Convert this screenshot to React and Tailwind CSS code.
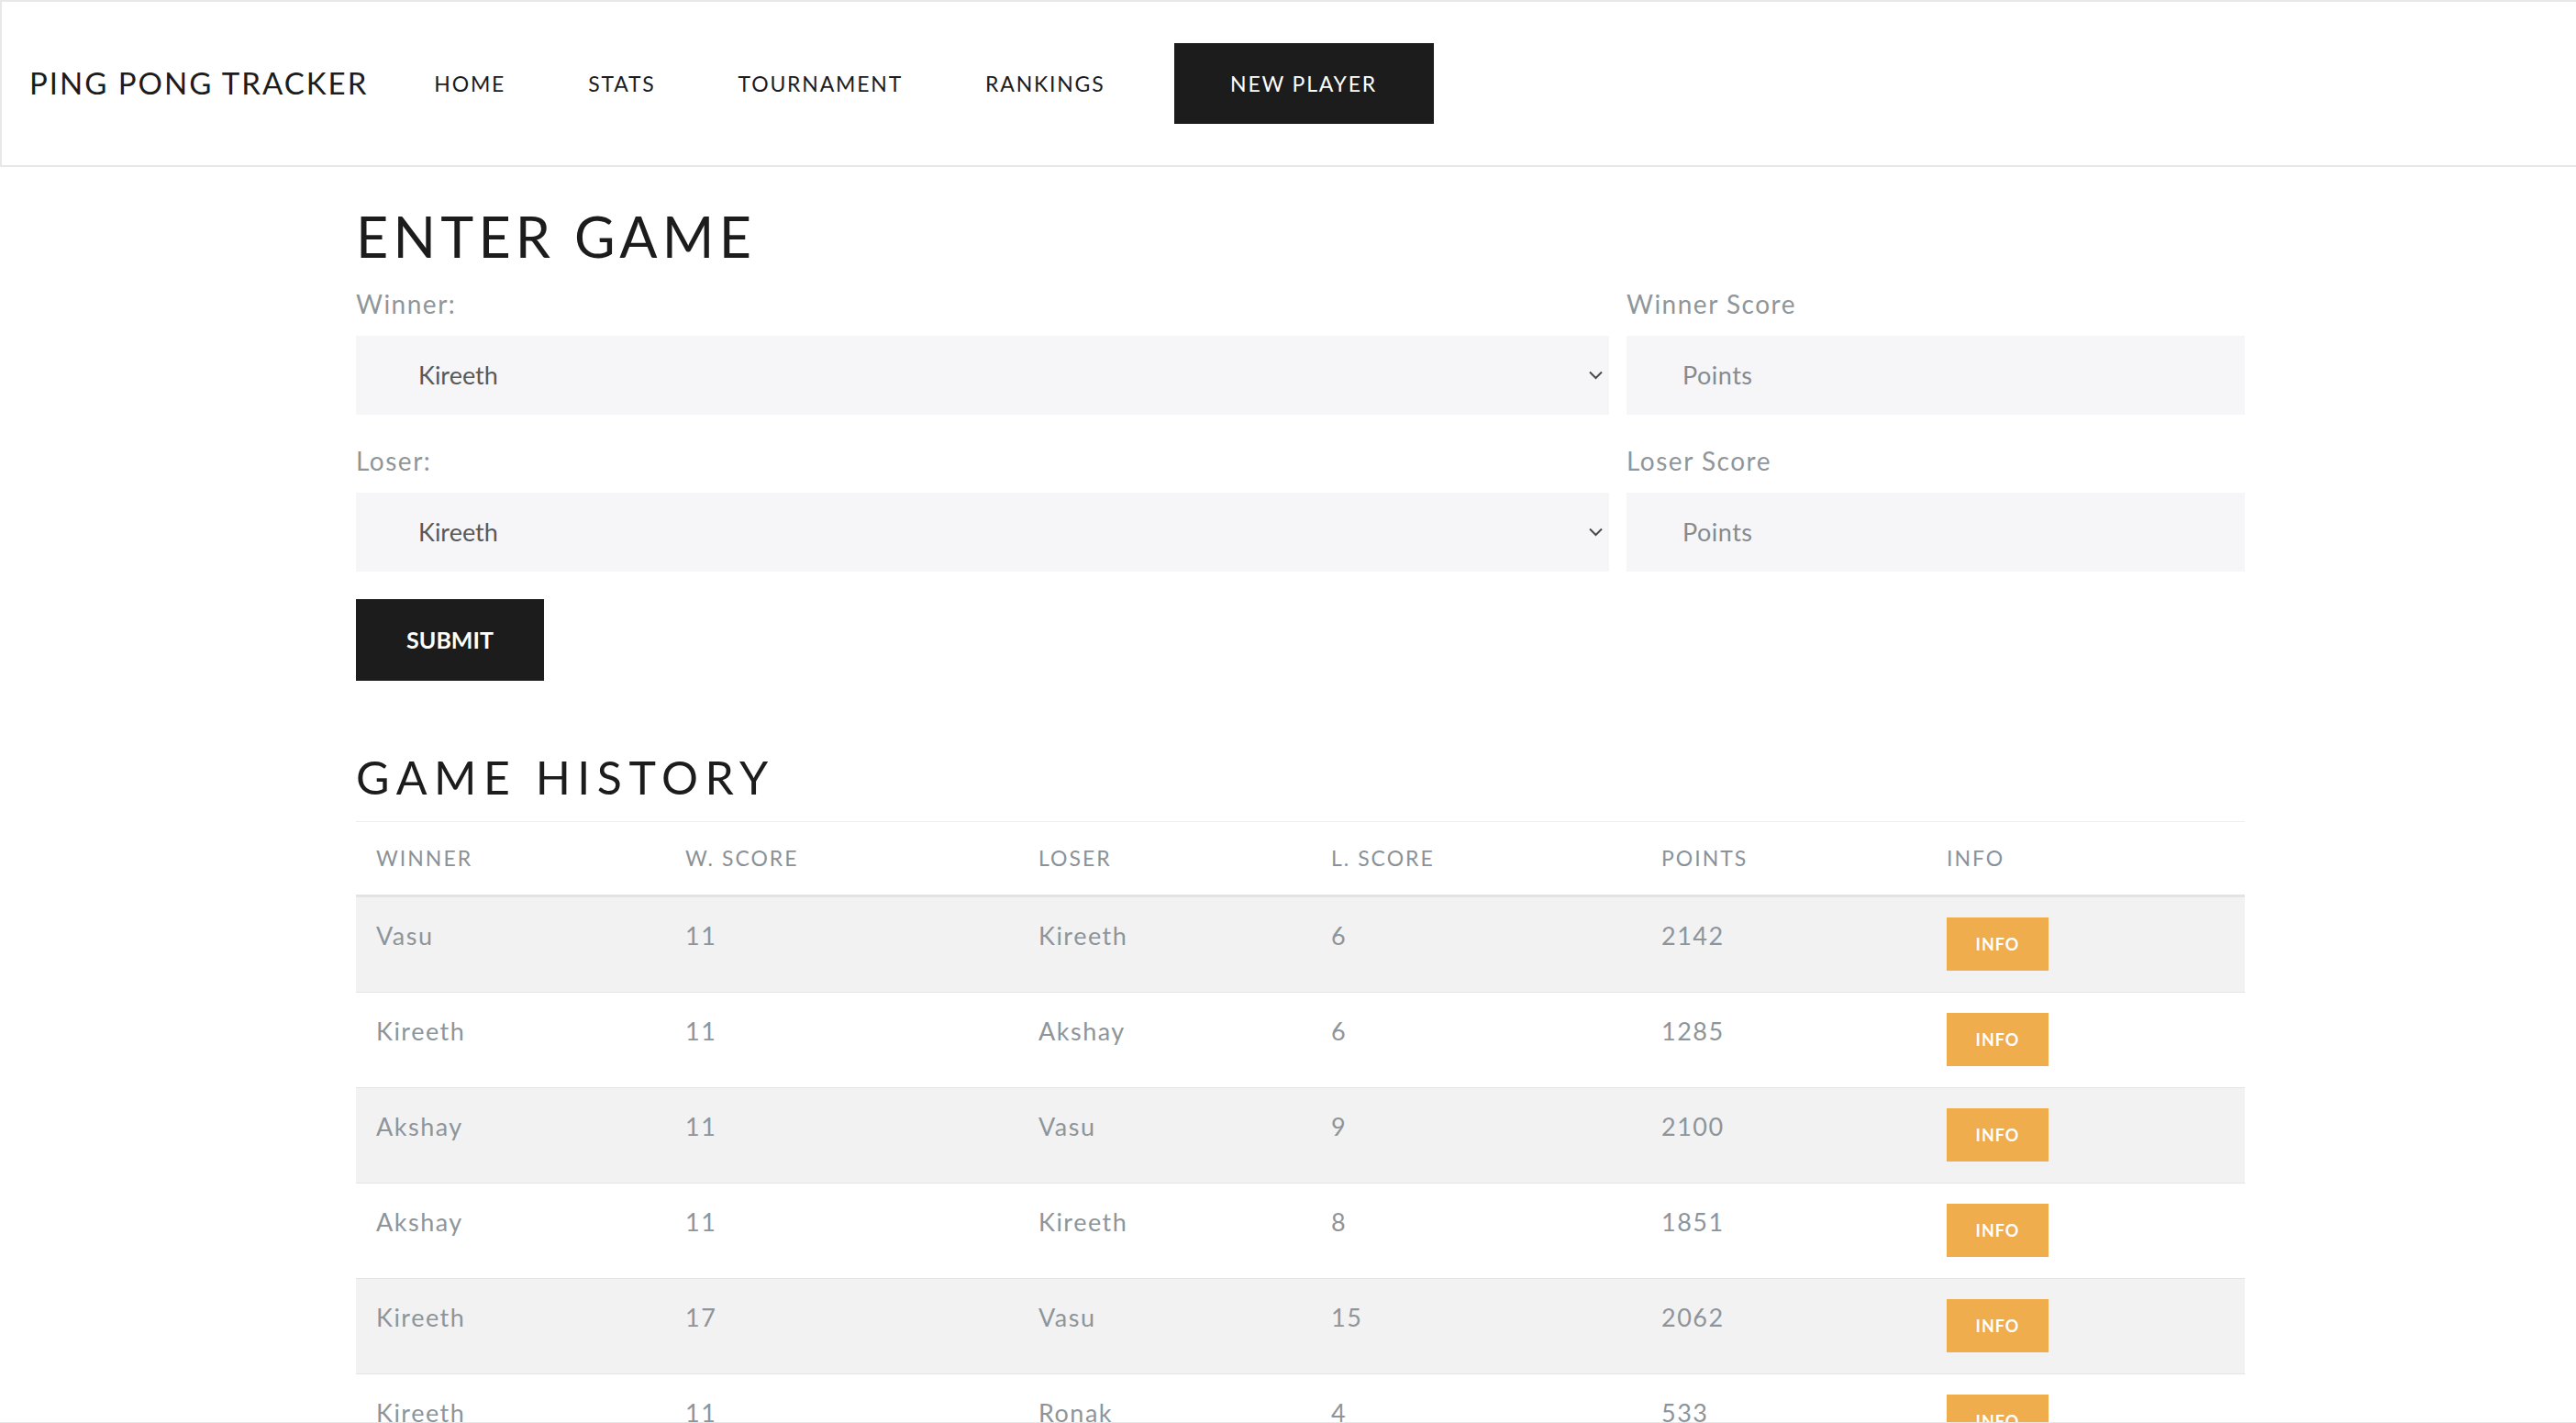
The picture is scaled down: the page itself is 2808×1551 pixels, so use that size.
import React from "react"

const games = [
  { winner: "Vasu", wScore: 11, loser: "Kireeth", lScore: 6, points: 2142 },
  { winner: "Kireeth", wScore: 11, loser: "Akshay", lScore: 6, points: 1285 },
  { winner: "Akshay", wScore: 11, loser: "Vasu", lScore: 9, points: 2100 },
  { winner: "Akshay", wScore: 11, loser: "Kireeth", lScore: 8, points: 1851 },
  { winner: "Kireeth", wScore: 17, loser: "Vasu", lScore: 15, points: 2062 },
  { winner: "Kireeth", wScore: 11, loser: "Ronak", lScore: 4, points: 533 },
]

const cols = "grid grid-cols-[337px_385px_319px_360px_311px_347px]"

const Chevron = () => (
  <svg width="17" height="11" viewBox="0 0 17 11" className="absolute right-[6px] top-1/2 -translate-y-1/2">
    <polyline points="2,2 8.5,8.5 15,2" fill="none" stroke="#4a4a4a" strokeWidth="2" />
  </svg>
)

const Field = ({ label, children }) => (
  <div className="flex flex-col">
    <label className="text-[28px] leading-[42px] tracking-[1.5px] text-[#8f969a]">{label}</label>
    <div className="mt-[14px]">{children}</div>
  </div>
)

const SelectBox = () => (
  <div className="relative h-[86px] bg-[#f6f6f8] flex items-center pl-[68px] text-[27px] text-[#595959]">
    Kireeth
    <Chevron />
  </div>
)

const PointsBox = () => (
  <div className="h-[86px] bg-[#f6f6f8] flex items-center pl-[61px] text-[27px] text-[#868b8f] tracking-[0.5px]">
    Points
  </div>
)

const App = () => {
  return (
    <div className="h-[1551px] overflow-hidden bg-white border-b border-[#e6e6e6] font-['Lato',sans-serif]">
      <header className="h-[182px] border-t-2 border-l-2 border-b-2 border-[#e8e8e8] flex items-center pl-[30px]">
        <span className="text-[33px] tracking-[2px] text-[#1c1c1c]">PING PONG TRACKER</span>
        <nav className="flex items-center ml-[27px] text-[23px] tracking-[1.8px] text-[#1c1c1c]">
          <a className="px-[45px]">HOME</a>
          <a className="px-[45px]">STATS</a>
          <a className="px-[45px]">TOURNAMENT</a>
          <a className="px-[45px]">RANKINGS</a>
          <a className="ml-[30px] w-[283px] h-[88px] bg-[#1c1c1c] text-white flex items-center justify-center">NEW PLAYER</a>
        </nav>
      </header>

      <main className="ml-[388px] w-[2059px]">
        <h1 className="mt-[39px] text-[61px] leading-[1.2] tracking-[0.085em] text-[#1c1c1c]">ENTER GAME</h1>

        <div className="mt-[16px] grid grid-cols-[1366px_674px] gap-x-[19px] gap-y-[29px]">
          <Field label="Winner:"><SelectBox /></Field>
          <Field label="Winner Score"><PointsBox /></Field>
          <Field label="Loser:"><SelectBox /></Field>
          <Field label="Loser Score"><PointsBox /></Field>
        </div>

        <button className="mt-[30px] w-[205px] h-[89px] bg-[#1c1c1c] text-white text-[25px] font-bold">SUBMIT</button>

        <h2 className="mt-[75px] text-[50px] leading-[1.2] tracking-[0.15em] text-[#1c1c1c]">GAME HISTORY</h2>

        <div className="mt-[18px] border-t border-[#eeeeee]">
          <div className={`${cols} h-[82px] items-center border-b-[3px] border-[#e3e3e3] text-[23px] tracking-[2px] text-[#8b9297]`}>
            <div className="pl-[22px]">WINNER</div>
            <div className="pl-[22px]">W. SCORE</div>
            <div className="pl-[22px]">LOSER</div>
            <div className="pl-[22px]">L. SCORE</div>
            <div className="pl-[22px]">POINTS</div>
            <div className="pl-[22px]">INFO</div>
          </div>
          {games.map((g, i) => (
            <div
              key={i}
              className={`${cols} h-[104px] items-start border-b border-[#e4e4e4] text-[27px] leading-[40px] tracking-[1.5px] text-[#8e959a] ${i % 2 === 0 ? "bg-[#f2f2f2]" : "bg-white"}`}
            >
              <div className="pl-[22px] pt-[22px]">{g.winner}</div>
              <div className="pl-[22px] pt-[22px]">{g.wScore}</div>
              <div className="pl-[22px] pt-[22px]">{g.loser}</div>
              <div className="pl-[22px] pt-[22px]">{g.lScore}</div>
              <div className="pl-[22px] pt-[22px]">{g.points}</div>
              <div className="pl-[22px] pt-[22px]">
                <button className="w-[111px] h-[58px] bg-[#f0ad4e] text-white text-[18px] font-bold tracking-[1px] leading-none">INFO</button>
              </div>
            </div>
          ))}
        </div>
      </main>
    </div>
  )
}

export default App
